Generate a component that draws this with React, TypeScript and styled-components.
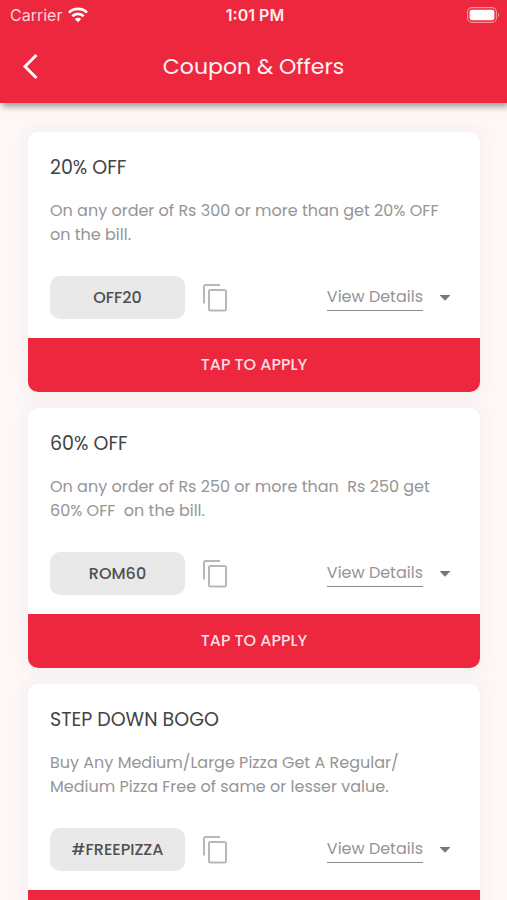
import React, { useState } from "react";
import styled, { createGlobalStyle } from "styled-components";

const GlobalStyle = createGlobalStyle`
  * { box-sizing: border-box; }
  body {
    margin: 0;
    background: #fdf8f7;
    font-family: Poppins, Inter, sans-serif;
  }
  button { font-family: inherit; border: 0; padding: 0; cursor: pointer; }
  h1, h2, p { margin: 0; font-weight: 400; }
`;

const RED = "#ed273e";

const Screen = styled.div`
  height: 100vh;
  display: flex;
  flex-direction: column;
`;

const Header = styled.header`
  flex: none;
  position: relative;
  z-index: 1;
  background: ${RED};
  color: #fff;
  box-shadow: 2px 4px 6px rgba(0, 0, 0, 0.34);
`;

const StatusBar = styled.div`
  display: grid;
  grid-template-columns: 1fr auto 1fr;
  align-items: center;
  height: 30px;
  padding: 0 7px 0 10px;
  font: 400 16px/20px Inter, sans-serif;
`;

const Carrier = styled.span`
  display: flex;
  align-items: center;
  gap: 6px;
  color: #fdd5da;
`;

const Clock = styled.time`
  font-weight: 600;
  font-size: 16px;
  color: #ffeef0;
`;

const Battery = styled.svg`
  justify-self: end;
  display: block;
`;

const NavBar = styled.div`
  display: grid;
  grid-template-columns: 48px 1fr 48px;
  align-items: center;
  height: 73px;
  padding: 0 6px;
`;

const BackButton = styled.button`
  display: flex;
  align-items: center;
  justify-content: center;
  height: 48px;
  background: none;
  color: #fff;
`;

const Title = styled.h1`
  text-align: center;
  font-size: 22px;
  line-height: 32px;
  color: #fff4f5;
`;

const CouponList = styled.main`
  flex: 1;
  min-height: 0;
  overflow-y: auto;
  scrollbar-width: none;
  display: flex;
  flex-direction: column;
  gap: 16px;
  padding: 29px 27px 29px 28px;
`;

const Card = styled.article`
  flex: none;
  border-radius: 10px;
  background: #fff;
  box-shadow: 0 0 12px 6px rgba(60, 50, 50, 0.03);
`;

const CardBody = styled.div`
  padding: 21px 22px 19px;
`;

const CardTitle = styled.h2`
  font-size: 19px;
  line-height: 30px;
  color: #444;
`;

const Description = styled.p`
  margin-top: 16px;
  font-size: 16px;
  line-height: 24px;
  color: #959595;
  white-space: pre-line;
`;

const Actions = styled.div`
  display: flex;
  align-items: center;
  margin-top: 29px;
`;

const Code = styled.span`
  width: 135px;
  border-radius: 10px;
  background: #e9e9e9;
  color: #505050;
  text-align: center;
  font-size: 16px;
  line-height: 43px;
  font-weight: 500;
`;

const CopyButton = styled.button`
  display: flex;
  margin-left: 15px;
  background: none;
  color: #b8b8b8;
`;

const DetailsButton = styled.button`
  display: flex;
  align-items: center;
  gap: 16px;
  margin-left: auto;
  margin-right: 7px;
  background: none;
  color: #777;
`;

const DetailsLabel = styled.span`
  border-bottom: 1px solid #8c8c8c;
  font-size: 16px;
  line-height: 26px;
  color: #959595;
`;

const ApplyButton = styled.button`
  display: block;
  width: 100%;
  height: 54px;
  border-radius: 0 0 10px 10px;
  background: ${RED};
  color: #ffdfe3;
  font-size: 16px;
  line-height: 24px;
  font-weight: 500;
`;

type Coupon = { title: string; description: string; code: string };

const coupons: Coupon[] = [
  {
    title: "20% OFF",
    description: "On any order of Rs 300 or more than get 20% OFF\non the bill.",
    code: "OFF20",
  },
  {
    title: "60% OFF",
    description:
      "On any order of Rs 250 or more than\u00a0 Rs 250 get\n60% OFF\u00a0 on the bill.",
    code: "ROM60",
  },
  {
    title: "STEP DOWN BOGO",
    description:
      "Buy Any Medium/Large Pizza Get A Regular/\nMedium Pizza Free of same or lesser value.",
    code: "#FREEPIZZA",
  },
];

function WifiIcon() {
  return (
    <svg width="20" height="16" viewBox="0 0 20 16" fill="none" stroke="#fff" strokeWidth="2.7" aria-label="Wi-Fi">
      <path d="M1 5.6a12.8 12.8 0 0 1 18 0" />
      <path d="M4.3 9.2a8.1 8.1 0 0 1 11.4 0" />
      <path d="M10 15.2 6.8 12a4.5 4.5 0 0 1 6.4 0Z" fill="#fff" stroke="none" />
    </svg>
  );
}

function BatteryIcon() {
  return (
    <Battery width="33" height="16" viewBox="0 0 33 16" aria-label="Battery full">
      <rect x="0.6" y="0.6" width="28.8" height="14.8" rx="4.4" fill="none" stroke="#f8919d" strokeWidth="1.1" />
      <rect x="2.6" y="2.7" width="24.8" height="10.6" rx="2.4" fill="#fff" />
      <path d="M31 5.8c1.6.7 1.6 3.7 0 4.4Z" fill="#f8919d" />
    </Battery>
  );
}

function CopyIcon() {
  return (
    <svg width="30" height="30" viewBox="0 0 30 30" fill="none" stroke="currentColor" strokeWidth="2" aria-hidden="true">
      <path d="M20 2H5.5Q4 2 4 3.5V20.5" />
      <rect x="9" y="7" width="17" height="20.5" rx="1.5" />
    </svg>
  );
}

function CouponCard({ title, description, code }: Coupon) {
  const [copied, setCopied] = useState(false);
  return (
    <Card>
      <CardBody>
        <CardTitle>{title}</CardTitle>
        <Description>{description}</Description>
        <Actions>
          <Code>{code}</Code>
          <CopyButton
            type="button"
            aria-label={`Copy code ${code}`}
            aria-pressed={copied}
            onClick={() => setCopied(true)}
          >
            <CopyIcon />
          </CopyButton>
          <DetailsButton type="button">
            <DetailsLabel>View Details</DetailsLabel>
            <svg width="12" height="6" viewBox="0 0 12 6" aria-hidden="true">
              <path d="M0.5 0H11.5L6 5.8Z" fill="currentColor" />
            </svg>
          </DetailsButton>
        </Actions>
      </CardBody>
      <ApplyButton type="button">TAP TO APPLY</ApplyButton>
    </Card>
  );
}

export default function App() {
  return (
    <>
      <GlobalStyle />
      <Screen>
        <Header>
          <StatusBar>
            <Carrier>
              Carrier
              <WifiIcon />
            </Carrier>
            <Clock>1:01 PM</Clock>
            <BatteryIcon />
          </StatusBar>
          <NavBar>
            <BackButton type="button" aria-label="Back">
              <svg width="18" height="26" viewBox="0 0 18 26" fill="none" stroke="currentColor" strokeWidth="3" aria-hidden="true">
                <path d="M15.5 1 4 12.500l11.500 11.500" />
              </svg>
            </BackButton>
            <Title>Coupon &amp; Offers</Title>
          </NavBar>
        </Header>
        <CouponList>
          {coupons.map((coupon) => (
            <CouponCard key={coupon.code} {...coupon} />
          ))}
        </CouponList>
      </Screen>
    </>
  );
}
